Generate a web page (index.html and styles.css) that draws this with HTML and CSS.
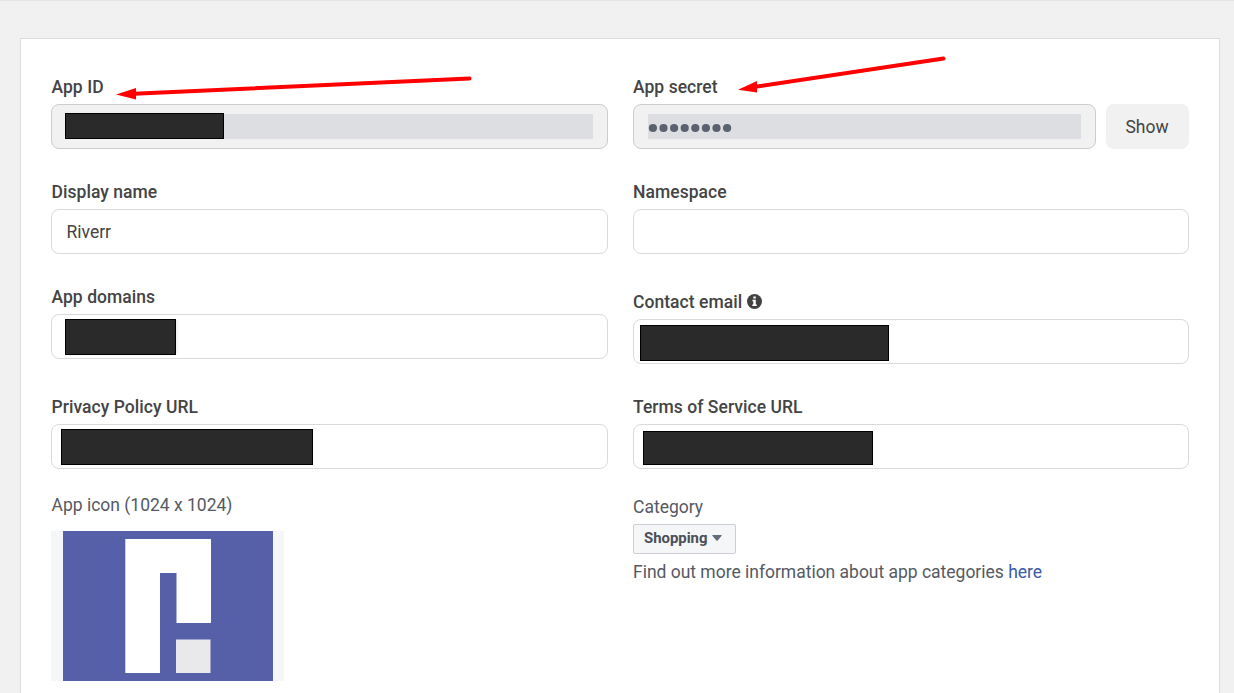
FILE: index.html
```html
<!DOCTYPE html>
<html lang="en">
<head>
<meta charset="utf-8">
<title>App settings</title>
<link rel="stylesheet" href="styles.css">
</head>
<body>
<main class="card">
  <section class="column inset">
    <div class="field">
      <div class="label">App ID</div>
      <div class="input disabled"><div class="selection"><span class="mask mask-id"></span></div></div>
    </div>
    <div class="field">
      <div class="label">Display name</div>
      <div class="input value">Riverr</div>
    </div>
    <div class="field wide-gap">
      <div class="label">App domains</div>
      <div class="input"><span class="mask mask-domain"></span></div>
    </div>
    <div class="field">
      <div class="label">Privacy Policy URL</div>
      <div class="input"><span class="mask mask-privacy"></span></div>
    </div>
    <div class="caption icon-caption">App icon (1024 x 1024)</div>
    <div class="app-icon">
      <svg width="210" height="150" viewBox="0 0 210 150">
        <rect width="210" height="150" fill="#5660a8"/>
        <path d="M62.3 8H148V92H113.500V42H97V142H62.300Z" fill="#fff"/>
        <rect x="113" y="108.500" width="34.500" height="33.500" fill="#e9e9eb"/>
      </svg>
    </div>
  </section>
  <section class="column">
    <div class="field">
      <div class="label">App secret</div>
      <div class="secret-row">
        <div class="input disabled secret"><div class="selection">
          <svg class="dots" width="86" height="10" viewBox="0 0 86 10" fill="#5a6270"><circle cx="4.900" cy="5" r="4.100"/><circle cx="15.500" cy="5" r="4.100"/><circle cx="26.100" cy="5" r="4.100"/><circle cx="36.700" cy="5" r="4.100"/><circle cx="47.300" cy="5" r="4.100"/><circle cx="57.900" cy="5" r="4.100"/><circle cx="68.500" cy="5" r="4.100"/><circle cx="79.100" cy="5" r="4.100"/></svg>
        </div></div>
        <button class="show">Show</button>
      </div>
    </div>
    <div class="field">
      <div class="label">Namespace</div>
      <div class="input"></div>
    </div>
    <div class="field lowered">
      <div class="label">Contact email
        <svg class="info" width="15" height="15" viewBox="0 0 15 15"><circle cx="7.500" cy="7.500" r="7.500" fill="#414141"/><path d="M6.300 2.500h2.500v2H6.300zM5.400 5.800h3.400v4.700h1v1.500H5.300v-1.500h1V7.300h-.9z" fill="#fff"/></svg>
      </div>
      <div class="input"><span class="mask mask-email"></span></div>
    </div>
    <div class="field">
      <div class="label">Terms of Service URL</div>
      <div class="input"><span class="mask mask-terms"></span></div>
    </div>
    <div class="caption category-caption">Category</div>
    <button class="dropdown">Shopping <svg width="10" height="6" viewBox="0 0 10 6"><path d="M.7 0H9.300Q10 0 9.600.8L5.700 5.500Q5 6.200 4.300 5.500L.4.800Q0 0 .7 0Z" fill="#656c7b"/></svg></button>
    <div class="caption hint">Find out more information about app categories <a class="link">here</a></div>
  </section>
</main>
<svg class="arrows" width="1234" height="693" viewBox="0 0 1234 693" fill="#f00" stroke="#f00">
  <path d="M469.500 78.500L134 93.800M943.500 58.500L757 86.500" stroke-width="4" stroke-linecap="round"/>
  <path d="M116 94.500L136 88V99.500ZM738 89.700L757 81V92.400Z" stroke="none"/>
</svg>
</body>
</html>
```

FILE: styles.css
```css
* { box-sizing: border-box; }
body {
  margin: 0;
  height: 693px;
  overflow: hidden;
  padding: 37px 14px 0 20px;
  background: #f1f1f1;
  border-top: 1px solid #e5e5e7;
  font: 17.5px/24px Roboto, sans-serif;
  color: #444;
}
.card {
  display: grid;
  grid-template-columns: 557px 556px;
  column-gap: 25px;
  height: 655px;
  padding: 36px 30px 0;
  background: #fff;
  border: 1px solid #dcdde1;
  border-bottom: 0;
}
.column { display: flex; flex-direction: column; align-items: stretch; }
.field { margin-bottom: 31px; }
.wide-gap { margin-bottom: 36px; }
.lowered { margin-top: 5px; }
.label {
  display: flex;
  align-items: center;
  gap: 5px;
  height: 24px;
  margin-bottom: 5px;
  font-weight: 500;
  letter-spacing: 0.04px;
  white-space: nowrap;
}
.inset .label, .inset .caption { padding-left: 0.5px; }
.info { margin-top: -2px; margin-left: -0.5px; }
.input {
  display: flex;
  align-items: center;
  height: 45px;
  padding: 0 14px;
  background: #fff;
  border: 1px solid #d9dadb;
  border-radius: 8px;
}
.value { padding-left: 14.5px; }
.input.disabled { background: #f1f1f1; border-color: #cbcccd; }
.selection {
  display: flex;
  align-items: center;
  width: 100%;
  height: 25px;
  background: #dddee2;
}
.inset .selection { margin: 0 0 0 -1px; width: 528px; flex: none; }
.mask { flex: none; background: #2a2a2a; border: 1px solid #000; }
.mask-id { width: 159px; height: 26px; margin-top: -1px; }
.mask-domain { width: 111px; height: 36px; margin-left: -1px; box-shadow: 3px 0 2px -1px #f1f1f1; }
.mask-privacy { width: 252px; height: 36px; margin-left: -5px; }
.mask-email { width: 249px; height: 36px; margin: 3px 0 0 -8px; }
.mask-terms { width: 230px; height: 34px; margin: 3px 0 0 -5px; }
.secret-row { display: flex; gap: 10px; }
.secret { flex: 1; }
.dots { margin-top: 3px; }
.show {
  width: 83px;
  height: 45px;
  padding: 0 1px 0 0;
  border: 0;
  border-radius: 8px;
  background: #f1f1f1;
  color: #444;
  font: inherit;
}
.caption { color: #555962; }
.icon-caption { margin-top: -7px; }
.app-icon {
  display: flex;
  width: 233px;
  height: 150px;
  margin-top: 14px;
  padding-left: 12px;
  background: #f5f6f8;
}
.category-caption { margin-top: -5px; }
.hint { letter-spacing: -0.015px; }
.dropdown {
  display: flex;
  align-items: center;
  gap: 5px;
  width: 103px;
  height: 30px;
  margin: 5px 0 6px;
  padding: 0 0 2px 10px;
  border: 1px solid #cccfd6;
  border-radius: 2px;
  background: #f5f6f7;
  color: #4b4f56;
  font: bold 14.9px/20px Roboto, sans-serif;
}
.link { color: #3b5ba5; }
/* Callout arrows drawn over the form */
.arrows { position: absolute; inset: 0; pointer-events: none; }
```
